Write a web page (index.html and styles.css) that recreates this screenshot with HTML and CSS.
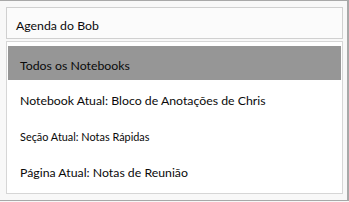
FILE: index.html
```html
<!DOCTYPE html>
<html lang="pt-BR">
<head>
    <meta charset="UTF-8">
    <title>Pesquisar em</title>
    <link rel="stylesheet" href="styles.css">
</head>
<body>

    <div class="frame">
        <div class="search-box">Agenda do Bob</div>

        <ul class="scope-list">
            <li class="scope-item selected">Todos os Notebooks</li>
            <li class="scope-item">Notebook Atual: Bloco de Anotações de Chris</li>
            <li class="scope-item small">Seção Atual: Notas Rápidas</li>
            <li class="scope-item last">Página Atual: Notas de Reunião</li>
        </ul>
    </div>

</body>
</html>
```

FILE: styles.css
```css
body {
    margin: 0;
    padding: 0;
    background-color: #f7f7f7;
    font-family: 'Lato', 'Open Sans', sans-serif;
    color: #0a0a0a;
}
.frame {
    box-sizing: border-box;
    width: 349px;
    height: 201px;
    padding: 6px 0 0 6px;
    background-color: #f8f8f8;
    border-top: 1px solid #a8a8a8;
    border-right: 2px solid #a8a8a8;
    border-bottom: 1px solid #a8a8a8;
}
.search-box {
    box-sizing: border-box;
    width: 337px;
    height: 32px;
    padding: 10px 0 0 9px;
    font-size: 12.3px;
    line-height: 16px;
    background-color: #fbfbfb;
    border: 1px solid #d0d0d0;
}
.scope-list {
    box-sizing: border-box;
    list-style: none;
    width: 337px;
    height: 153px;
    margin: 2px 0 0 0;
    padding: 4px 1px;
    background-color: #fff;
    border: 1px solid #d6d6d6;
}
.scope-item {
    box-sizing: border-box;
    height: 35px;
    padding: 13px 0 0 12px;
    font-size: 12.3px;
    line-height: 16px;
}
.scope-item.selected {
    height: 34px;
    padding-top: 12px;
    background-color: #969696;
}
.scope-item.small {
    height: 36px;
    padding-top: 15px;
    font-size: 10.9px;
    line-height: 13px;
}
.scope-item.last {
    padding-top: 14px;
}
```
